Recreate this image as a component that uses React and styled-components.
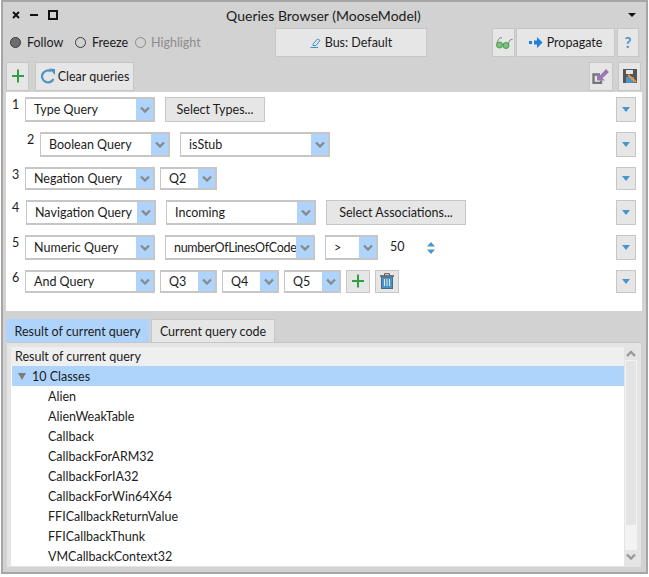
import React from "react";
import styled, { createGlobalStyle } from "styled-components";

const Global = createGlobalStyle`
  html, body { margin: 0; padding: 0; background: #fff; }
  body { font-family: Lato, "Noto Sans", sans-serif; }
  * { box-sizing: border-box; }
`;
const font = `font-family: Lato, "Noto Sans", sans-serif; font-size: 12.5px; color: #1c1c1c;`;

const Win = styled.div`
  width: 647px; height: 574px; margin-left: 1px; background: #d2d2d2; border: 2px solid #a6a6a6;
  display: flex; flex-direction: column; ${font}
`;
const TitleBar = styled.div`
  height: 26px; display: flex; align-items: center; padding: 0 10px 0 9px; flex: none;
`;
const TitleControls = styled.div`display: flex; align-items: center; gap: 10px; width: 50px;`;
const Title = styled.div`flex: 1; text-align: center; font-size: 14px; padding-right: 3px;`;
const FollowRow = styled.div`
  height: 29px; flex: none; display: flex; align-items: center; padding-left: 7px;
`;
const RadioItem = styled.div`width: ${p => p.$w}px; flex: none; display: flex; align-items: center;`;
const Radio = styled.span`
  width: 11px; height: 11px; border-radius: 50%; flex: none; margin-right: ${p => p.$off ? 5 : 6}px;
  border: 1.5px solid ${p => p.$off ? "#8a8a8a" : "#3a3a3a"};
  background: ${p => p.$on ? "#6e6e6e" : "transparent"};
`;
const RadioLabel = styled.span`color: ${p => p.$off ? "#8d8d8d" : "#1c1c1c"}; padding-bottom: 1px;`;
const Flat = styled.button`
  ${font} height: ${p => p.$h || 29}px; width: ${p => p.$w}px; flex: none; padding: 0 0 1px; margin: 0 0 0 ${p => p.$ml || 0}px;
  background: #e6e6e6; border: 1px solid #c6c6c6; border-radius: 0;
  display: inline-flex; align-items: center; justify-content: center; gap: ${p => p.$gap || 0}px;
  white-space: nowrap;
`;
const HelpButton = styled(Flat)`color: #4c94c8; font-weight: 700; font-size: 15px;`;
const RowMenuButton = styled(Flat)`height: 100%;`;
const Toolbar = styled.div`
  display: flex; align-items: flex-start; padding: 5px 5px 0 3px; height: 35px; flex: none;
`;
const Spacer = styled.div`flex: 1;`;
const Queries = styled.div`
  background: #fff; margin: 0 4px 0 3px; height: 219px; flex: none; padding: 5px 6px 0 6px;
  display: flex; flex-direction: column; gap: 10px;
`;
const Row = styled.div`
  display: flex; align-items: flex-start; height: ${p => p.$h}px; padding-left: ${p => p.$pl || 0}px;
`;
const Num = styled.span`width: 13px; flex: none; line-height: 16px;`;
const Select = styled.div`
  ${font} width: ${p => p.$w}px; height: 100%; flex: none; margin-left: ${p => p.$ml || 0}px; background: #fff;
  border: solid #c6c6c6; border-width: 2px 2px 2px 1px; display: flex; align-items: center; overflow: hidden;
`;
const SelectText = styled.span`
  flex: 1; min-width: 0; padding: 0 0 1px 8px; white-space: nowrap; overflow: hidden;
  letter-spacing: ${p => p.$tight ? "-0.3px" : "normal"};
`;
const Arrow = styled.span`
  width: 17px; flex: none; align-self: stretch; background: #aed4fb; display: flex; align-items: center; justify-content: center;
`;
const Value = styled.span`width: 37px; flex: none; margin-left: 12px; line-height: 23px;`;
const SpinWrap = styled.span`flex: none; display: flex; height: 100%; align-items: center;`;
const Tabs = styled.div`display: flex; padding: 8px 0 0 3px; gap: 2px; height: 31px; flex: none;`;
const Tab = styled.div`
  height: 23px; width: ${p => p.$w}px; display: flex; align-items: center; justify-content: center;
  background: ${p => p.$active ? "#aed4fb" : "#e6e6e6"}; border: 1px solid ${p => p.$active ? "#aed4fb" : "#c6c6c6"}; border-bottom: 0;
`;
const Results = styled.div`
  flex: none; margin: 0 5px 0 4px; height: 225px; background: #e4e4e4; border-top: 1px solid #c6c6c6;
  padding: 4px; display: flex;
`;
const ListArea = styled.div`flex: 1; min-width: 0; display: flex; flex-direction: column; background: #fff; margin-right: 1px;`;
const ListHead = styled.div`height: 20px; background: #efefef; line-height: 19px; padding-left: 4px;`;
const ListRow = styled.div`
  height: 20px; flex: none; display: flex; align-items: center; padding-left: ${p => p.$sel ? 6 : 37}px;
  margin-left: ${p => p.$sel ? 1 : 0}px;
  background: ${p => p.$sel ? "#aed4fb" : "#fff"}; gap: 6px;
`;
const Scroll = styled.div`width: 12px; flex: none; display: flex; flex-direction: column; align-items: stretch;`;
const ScrollBtn = styled.div`height: 13px; display: flex; align-items: center; justify-content: center; flex: none;`;
const Track = styled.div`flex: 1; background: #f3f3f3; border: 1px solid #f3f3f3; display: flex; align-items: flex-start;`;
const Thumb = styled.div`flex: 1; background: #e4e4e4; height: 164px;`;

const Chevron = ({ up, color = "#8a8a8a" }) => (
  <svg width="10" height="7" viewBox="0 0 10 7">
    <path d={up ? "M1 6 L5 2 L9 6" : "M1 1.5 L5 5.5 L9 1.5"} fill="none" stroke={color} strokeWidth="2.4" />
  </svg>
);
const Sel = ({ w, ml, tight, children }) => (
  <Select $w={w} $ml={ml}><SelectText $tight={tight}>{children}</SelectText><Arrow><Chevron /></Arrow></Select>
);
const Plus = () => (
  <svg width="14" height="14" viewBox="0 0 14 14"><path d="M7 0.5V13.5M1 7H13" stroke="#2f9e44" strokeWidth="2" /></svg>
);
const MenuBtn = () => (
  <svg width="8" height="5" viewBox="0 0 8 5"><path d="M0 0H8L4 5Z" fill="#4c94c8" /></svg>
);
const RowMenu = () => <RowMenuButton $w={20}><MenuBtn /></RowMenuButton>;

const items = ["Alien", "AlienWeakTable", "Callback", "CallbackForARM32", "CallbackForIA32", "CallbackForWin64X64", "FFICallbackReturnValue", "FFICallbackThunk", "VMCallbackContext32"];

export default function App() {
  return (
    <>
      <Global />
      <Win>
        <TitleBar>
          <TitleControls>
            <svg width="8" height="8" viewBox="0 0 8 8"><path d="M1 1L7 7M7 1L1 7" stroke="#111" strokeWidth="2" /></svg>
            <svg width="8" height="8" viewBox="0 0 8 8"><path d="M0 4H8" stroke="#111" strokeWidth="2" /></svg>
            <svg width="10" height="10" viewBox="0 0 10 10"><rect x="1" y="1" width="8" height="8" fill="none" stroke="#111" strokeWidth="2" /></svg>
          </TitleControls>
          <Title>Queries Browser (MooseModel)</Title>
          <svg width="8" height="4" viewBox="0 0 8 4" style={{ marginLeft: 40 }}><path d="M0 0H8L4 4Z" fill="#111" /></svg>
        </TitleBar>
        <FollowRow>
          <RadioItem $w={65}><Radio $on /><RadioLabel>Follow</RadioLabel></RadioItem>
          <RadioItem $w={60}><Radio /><RadioLabel>Freeze</RadioLabel></RadioItem>
          <RadioItem $w={140}><Radio $off /><RadioLabel $off>Highlight</RadioLabel></RadioItem>
          <Flat $w={152} $gap={4}>
            <svg width="11" height="11" viewBox="0 0 11 11"><path d="M3 7L7.5 2L10 3.5L6 8.5H3Z" fill="none" stroke="#3f8ed0" /><path d="M0.5 10.5H8" stroke="#3f8ed0" /></svg>
            Bus: Default
          </Flat>
          <Flat $w={23} $ml={65}>
            <svg width="18" height="13" viewBox="0 0 18 13"><circle cx="4.5" cy="9" r="3" fill="#78c27a" stroke="#4f9a55" /><circle cx="11" cy="9.5" r="3" fill="#78c27a" stroke="#4f9a55" /><path d="M2 7C3 3 5 1 7 2M13.5 8C14 5 15 3 17.5 3.5M7.5 9L8 8.5" fill="none" stroke="#777" /></svg>
          </Flat>
          <Flat $w={99} $ml={1} $gap={4}>
            <svg width="14" height="11" viewBox="0 0 14 11"><rect x="0" y="4" width="3" height="3" fill="#1f7fd6" /><path d="M5 3.5H8V0L13.5 5.5L8 11V7.5H5Z" fill="#1f7fd6" /></svg>
            Propagate
          </Flat>
          <HelpButton $w={22} $ml={2}>?</HelpButton>
        </FollowRow>
        <Toolbar>
          <Flat $w={23}><Plus /></Flat>
          <Flat $w={99} $ml={6} $gap={2}>
            <svg width="16" height="16" viewBox="0 0 16 16"><path d="M13.5 11A6 6 0 1 1 11 3.2" fill="none" stroke="#4c94c8" strokeWidth="2.2" /><path d="M9 0.5L15 1V7Z" fill="#4c94c8" /></svg>
            Clear queries
          </Flat>
          <Spacer />
          <Flat $w={24}>
            <svg width="18" height="16" viewBox="0 0 18 16"><path d="M8 6.5H1.5V15H9V12.5" fill="none" stroke="#777" strokeWidth="2.4" /><path d="M5 12.5V5L7.7 7.7L14 1L17 4L10.5 10.3L13 12.5Z" fill="#9a78b4" /></svg>
          </Flat>
          <Flat $w={23} $ml={5}>
            <svg width="14" height="14" viewBox="0 0 14 14"><path d="M0 0H14V14H0Z" fill="#555" /><rect x="3" y="1" width="7" height="4" fill="#e6e6e6" /><rect x="3" y="8" width="8" height="6" fill="#4c94c8" /><path d="M5 6L13 13" stroke="#f29a2e" strokeWidth="2" /></svg>
          </Flat>
        </Toolbar>
        <Queries>
          <Row $h={25}>
            <Num>1</Num><Sel w={130}>Type Query</Sel>
            <Flat $w={100} $h={25} $ml={10}>Select Types...</Flat>
            <Spacer /><RowMenu />
          </Row>
          <Row $h={25} $pl={15}>
            <Num>2</Num><Sel w={130}>Boolean Query</Sel><Sel w={150} ml={10}>isStub</Sel>
            <Spacer /><RowMenu />
          </Row>
          <Row $h={23}>
            <Num>3</Num><Sel w={130}>Negation Query</Sel><Sel w={57} ml={5}>Q2</Sel>
            <Spacer /><RowMenu />
          </Row>
          <Row $h={25}>
            <Num>4</Num><Sel w={130} ml={1}>Navigation Query</Sel><Sel w={150} ml={10}>Incoming</Sel>
            <Flat $w={140} $h={25} $ml={10}>Select Associations...</Flat>
            <Spacer /><RowMenu />
          </Row>
          <Row $h={25}>
            <Num>5</Num><Sel w={130}>Numeric Query</Sel><Sel w={150} ml={10} tight>numberOfLinesOfCode</Sel><Sel w={53} ml={10}>&gt;</Sel>
            <Value>50</Value>
            <SpinWrap>
              <svg width="8" height="12" viewBox="0 0 8 12"><path d="M4 0L8 4.5H0Z M4 12L0 7.5H8Z" fill="#4c94c8" /></svg>
            </SpinWrap>
            <Spacer /><RowMenu />
          </Row>
          <Row $h={23}>
            <Num>6</Num><Sel w={130}>And Query</Sel><Sel w={57} ml={5}>Q3</Sel><Sel w={57} ml={5}>Q4</Sel><Sel w={57} ml={5}>Q5</Sel>
            <Flat $w={24} $h={23} $ml={5}><Plus /></Flat>
            <Flat $w={24} $h={23} $ml={5}>
              <svg width="14" height="16" viewBox="0 0 14 16"><path d="M0 3H14" stroke="#555" strokeWidth="1.5" /><path d="M4.5 2.5V0.7H9.5V2.5" stroke="#555" fill="none" /><rect x="1.5" y="4" width="11" height="11.5" fill="#4c94c8" stroke="#4a6a80" /><path d="M4.5 6V13M7 6V13M9.5 6V13" stroke="#dfeaf3" /></svg>
            </Flat>
            <Spacer /><RowMenu />
          </Row>
        </Queries>
        <Tabs>
          <Tab $active $w={143}>Result of current query</Tab>
          <Tab $w={124}>Current query code</Tab>
        </Tabs>
        <Results>
          <ListArea>
            <ListHead>Result of current query</ListHead>
            <ListRow $sel>
              <svg width="8" height="7" viewBox="0 0 8 7"><path d="M0 0H8L4 7Z" fill="#7c7c7c" /></svg>
              10 Classes
            </ListRow>
            {items.map(i => <ListRow key={i}>{i}</ListRow>)}
          </ListArea>
          <Scroll>
            <ScrollBtn><Chevron up color="#999" /></ScrollBtn>
            <Track><Thumb /></Track>
            <ScrollBtn><Chevron color="#999" /></ScrollBtn>
          </Scroll>
        </Results>
      </Win>
    </>
  );
}
